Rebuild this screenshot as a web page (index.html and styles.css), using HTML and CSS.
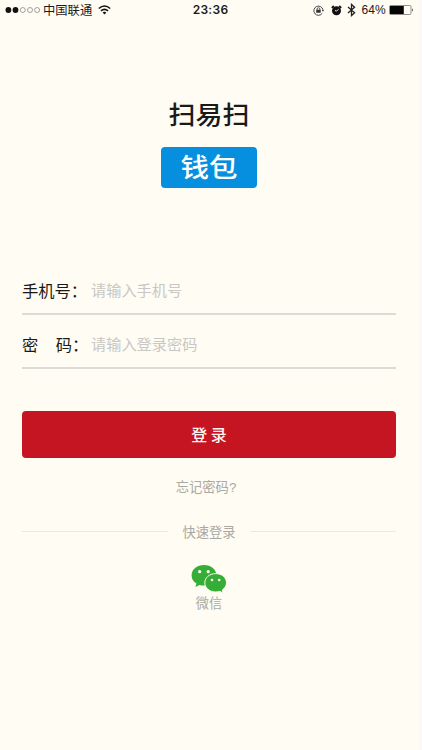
FILE: index.html
```html
<!DOCTYPE html>
<html lang="zh-CN">
<head>
<meta charset="utf-8">
<title>扫易扫钱包</title>
<link rel="stylesheet" href="styles.css">
</head>
<body>
<div class="screen">
  <header class="status">
    <div class="status-left">
      <svg class="signal" width="36" height="8" viewBox="0 0 36 8"><g fill="#111"><circle cx="3.4" cy="4" r="2.9"/><circle cx="10.5" cy="4" r="2.9"/></g><g fill="none" stroke="#8c8a86" stroke-width=".8"><circle cx="17.8" cy="4" r="2.5"/><circle cx="25" cy="4" r="2.5"/><circle cx="32.1" cy="4" r="2.5"/></g></svg>
      <span class="carrier">中国联通</span>
      <svg class="wifi" width="13" height="10" viewBox="0 0 13 10"><g fill="none" stroke="#111" stroke-width="1.6"><path d="M.8 3.5Q6.5-1.5 12.2 3.5"/><path d="M3 5.9Q6.5 2.9 10 5.9"/></g><path fill="#111" d="M4.6 7.5Q6.5 6 8.4 7.5L6.5 9.5Z"/></svg>
    </div>
    <time class="clock">23:36</time>
    <div class="status-right">
      <svg class="lock" width="11" height="11" viewBox="0 0 11 11"><g fill="none" stroke="#333"><path stroke-width=".9" d="M9.2 8.4A4.6 4.6 0 1 1 10 4.9"/><path stroke-width=".8" d="M4.1 5V4.1a1.4 1.4 0 0 1 2.8 0V5"/></g><path fill="#333" d="M3.2 4.8h4.5v3H3.2zM8.8 5h2.2l-1 1.7z"/></svg>
      <svg class="alarm" width="11" height="11" viewBox="0 0 11 11"><circle cx="5.5" cy="5.8" r="4.5" fill="#111"/><path stroke="#111" stroke-width="1.8" d="M.8 2.8 2.8 1M8.2 1l2 1.8"/><path fill="none" stroke="#fff" stroke-width=".9" d="M7.5 4.200 5.500 6.200 4 5.400"/></svg>
      <svg class="bluetooth" width="9" height="14" viewBox="0 0 9 14"><path fill="none" stroke="#222" stroke-width="1.3" d="M1 4 7.6 9.8 4.5 12.6V1.4L7.6 4.2 1 10"/></svg>
      <span class="percent">64%</span>
      <svg class="battery" width="25" height="10" viewBox="0 0 25 10"><rect x=".5" y=".5" width="21.500" height="9" rx="1.2" fill="none" stroke="#77756f" stroke-width=".8"/><path fill="#050505" d="M1 1h13.800v8H1z"/><path fill="#222" d="M23 3.200q1.800 1.800 0 3.600z"/></svg>
    </div>
  </header>
  <main>
    <h1 class="brand"><span class="brand-name">扫易扫</span><span class="brand-tag"><span>钱包</span></span></h1>
    <form class="form">
      <label class="field"><span class="label">手机号：</span><span class="hint">请输入手机号</span></label>
      <label class="field"><span class="label"><span class="spread"><span>密</span><span>码</span></span>：</span><span class="hint">请输入登录密码</span></label>
      <button class="submit" type="button">登 录</button>
    </form>
    <a class="forgot">忘记密码<span class="mark">?</span></a>
    <div class="divider"><span>快速登录</span></div>
    <a class="wechat">
      <svg width="36" height="30" viewBox="0 0 36 30"><path fill="#35ad36" d="M13 1C5.800 1 .6 5.600 .6 11.400c0 3.500 1.800 6.300 4.900 8.200L4.300 23l4.300-2.100q2.200.7 4.400.6c7.200 0 12.400-4.400 12.400-10.100S20.200 1 13 1Z"/><path fill="#35ad36" stroke="#fffcf3" stroke-width="1" d="M24.800 9.600c-6.400 0-11 4.100-11 9.200s4.600 9.200 11 9.200q2 0 4-.7l3.500 1.900-1-3.200c2.500-1.700 4.200-4.300 4.200-7.200 0-5.100-4.500-9.200-10.700-9.200Z"/><g fill="#fffcf3"><circle cx="8.700" cy="7.700" r="1.600"/><circle cx="17.200" cy="7.700" r="1.600"/><circle cx="21" cy="16" r="1.300"/><circle cx="28.200" cy="16" r="1.300"/></g></svg>
      <span>微信</span>
    </a>
  </main>
</div>
</body>
</html>
```
FILE: styles.css
```css
* { box-sizing: border-box; }
body {
  margin: 0;
  background: #f9f9fb;
  font-family: "Noto Sans CJK SC", sans-serif;
  color: #1c1a18;
}
.screen {
  width: 419px;
  height: 750px;
  background: #fffcf3;
}
.status {
  display: grid;
  grid-template-columns: 1fr auto 1fr;
  align-items: center;
  height: 20px;
  padding-left: 5px;
}
.status svg { display: block; flex: none; }
.status-left, .status-right { display: flex; align-items: center; }
.carrier { margin-left: 2px; font-size: 12.3px; line-height: 20px; }
.wifi { margin-left: 6px; }
.clock {
  font: 600 12px/20px Inter, sans-serif;
  letter-spacing: .3px;
  margin-left: -3px;
}
.status-right { justify-content: flex-end; padding-right: 5px; }
.lock { margin-right: 1px; }
.alarm { margin-left: 6px; }
.bluetooth { margin-left: 5px; }
.percent { margin: 0 3px 0 5px; font: 12px/20px "Liberation Sans", sans-serif; letter-spacing: .2px; }
main { display: flex; flex-direction: column; align-items: center; width: 418px; }
.brand {
  display: flex;
  flex-direction: column;
  align-items: center;
  margin: 78px 0 0;
  font-weight: 500;
}
.brand-name { font-size: 27px; line-height: 32px; transform: scaleY(.92); }
.brand-tag {
  width: 96px;
  height: 41px;
  margin-top: 17px;
  border-radius: 4px;
  background: #078fdf;
  color: #fff;
  font-size: 28.5px;
  font-weight: 500;
  line-height: 38px;
  text-align: center;
}
.brand-tag span { display: block; transform: scaleY(.92); }
.form { width: 374px; margin-top: 76px; }
.field {
  display: flex;
  align-items: center;
  height: 54px;
  padding-top: 4px;
  border-bottom: 2px solid #dedbd6;
}
.field:first-child { height: 51px; padding-top: 1px; }
.label { width: 69px; margin-top: 2px; font-size: 16.3px; white-space: nowrap; }
.spread { display: inline-flex; justify-content: space-between; width: 50px; }
.hint { margin-top: -1px; color: #c9c7c3; font-size: 15.2px; }
.submit {
  display: block;
  width: 374px;
  height: 47px;
  margin-top: 42.4px;
  padding: 0 0 2px;
  border: 0;
  border-radius: 4px;
  background: #c61522;
  color: #fff3ef;
  font: 500 16px "Noto Sans CJK SC", sans-serif;
}
.forgot { margin: 18.6px 6px 0 0; color: #aaa8a3; font-size: 13.3px; line-height: 20px; }
.mark { font-family: "Liberation Sans", sans-serif; }
.divider {
  display: flex;
  align-items: center;
  gap: 14px;
  width: 374px;
  margin-top: 24px;
  color: #aaa8a3;
  font-size: 13.3px;
  line-height: 20px;
}
.divider::before, .divider::after { content: ""; flex: 1; height: 1px; background: #ebe8e2; }
.wechat {
  display: flex;
  flex-direction: column;
  align-items: center;
  margin-top: 22px;
  color: #aaa8a3;
  font-size: 13.2px;
  line-height: 18px;
}
.wechat svg { display: block; }
```
